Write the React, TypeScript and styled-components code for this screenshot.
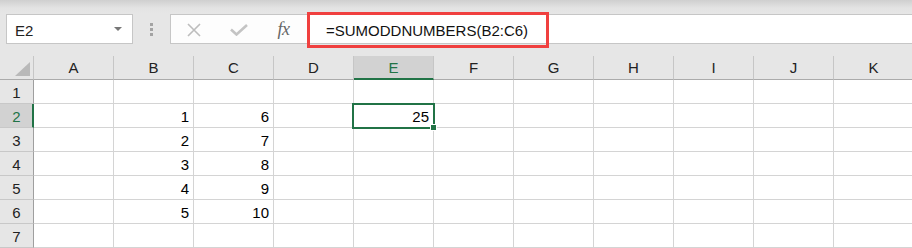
import styled, { createGlobalStyle, css } from "styled-components";

const COLUMNS = ["A", "B", "C", "D", "E", "F", "G", "H", "I", "J", "K"];

const DATA: Record<number, Record<string, string>> = {
   2: { B: "1", C: "6", E: "25" },
   3: { B: "2", C: "7" },
   4: { B: "3", C: "8" },
   5: { B: "4", C: "9" },
   6: { B: "5", C: "10" },
};

const ROW_COUNT = 7;
const ACTIVE = { column: "E", row: 2 };
const FORMULA = "=SUMODDNUMBERS(B2:C6)";

export default function App() {
   return (
      <>
         <GlobalStyle />
         <WindowStyled>
            <TopBand />
            <Toolbar>
               <NameBox>
                  <span>
                     {ACTIVE.column}
                     {ACTIVE.row}
                  </span>
                  <DropArrow />
               </NameBox>
               <Grip>
                  <i />
                  <i />
                  <i />
               </Grip>
               <FormulaButtons>
                  <IconSlot>
                     <svg width="14" height="14" viewBox="0 0 14 14">
                        <path
                           d="M1 1 L13 13 M13 1 L1 13"
                           stroke="#bdbdbd"
                           strokeWidth="1.6"
                           fill="none"
                        />
                     </svg>
                  </IconSlot>
                  <IconSlot>
                     <svg width="18" height="12" viewBox="0 0 18 12">
                        <polyline
                           points="1,5.5 6.5,10.5 17,1"
                           stroke="#c4c4c4"
                           strokeWidth="2.6"
                           fill="none"
                        />
                     </svg>
                  </IconSlot>
                  <IconSlot>
                     <FxLabel>fx</FxLabel>
                  </IconSlot>
               </FormulaButtons>
               <FormulaBar>
                  <Highlight />
                  <FormulaText>{FORMULA}</FormulaText>
               </FormulaBar>
            </Toolbar>

            <Sheet>
               <Corner>
                  <svg width="34" height="24" viewBox="0 0 34 24">
                     <polygon points="30,6 30,20 15,20" fill="#b9b9b9" />
                  </svg>
               </Corner>
               {COLUMNS.map((column) => (
                  <ColumnHeader
                     key={column}
                     $isActive={column === ACTIVE.column}
                  >
                     {column}
                  </ColumnHeader>
               ))}

               {Array.from({ length: ROW_COUNT }, (_, index) => {
                  const row = index + 1;
                  return [
                     <RowHeader key={`h${row}`} $isActive={row === ACTIVE.row}>
                        {row}
                     </RowHeader>,
                     ...COLUMNS.map((column) => (
                        <Cell
                           key={`${column}${row}`}
                           $isActive={
                              row === ACTIVE.row && column === ACTIVE.column
                           }
                        >
                           {DATA[row]?.[column] ?? ""}
                        </Cell>
                     )),
                  ];
               })}
            </Sheet>
         </WindowStyled>
      </>
   );
}

const GlobalStyle = createGlobalStyle`
   body {
      margin: 0;
      background: #ffffff;
      font-family: "Liberation Sans", Arial, sans-serif;
      overflow: hidden;
   }
`;

const WindowStyled = styled.div`
   width: 912px;
   height: 248px;
   overflow: hidden;
   background: #e6e6e6;
`;

const TopBand = styled.div`
   height: 14px;
   background: linear-gradient(#cfcfcf, #e3e3e3 8px, #e6e6e6);
`;

const Toolbar = styled.div`
   display: flex;
   align-items: stretch;
   height: 30px;
   padding-left: 6px;
   margin-bottom: 12px;
`;

const NameBox = styled.div`
   box-sizing: border-box;
   width: 127px;
   display: flex;
   align-items: center;
   justify-content: space-between;
   padding: 2px 10px 0 8px;
   background: #ffffff;
   border: 1px solid #c6c6c6;
   font-size: 15px;
   color: #222222;
`;

const DropArrow = styled.span`
   width: 0;
   height: 0;
   margin-top: -2px;
   border-left: 4px solid transparent;
   border-right: 4px solid transparent;
   border-top: 4px solid #777777;
`;

const Grip = styled.div`
   width: 37px;
   display: flex;
   flex-direction: column;
   align-items: center;
   justify-content: center;
   gap: 2px;

   i {
      display: block;
      width: 3px;
      height: 3px;
      background: #a3a3a3;
   }
`;

const FormulaButtons = styled.div`
   box-sizing: border-box;
   width: 137px;
   display: grid;
   grid-template-columns: repeat(3, 45px);
   background: #fdfdfd;
   border: 1px solid #c6c6c6;
   border-right: none;
`;

const IconSlot = styled.div`
   display: flex;
   align-items: center;
   justify-content: center;
   padding-top: 1px;
`;

const FxLabel = styled.span`
   font-family: "Liberation Serif", "Times New Roman", serif;
   font-style: italic;
   font-size: 18px;
   color: #666666;
   letter-spacing: -0.5px;
`;

const FormulaBar = styled.div`
   position: relative;
   flex: 1;
   box-sizing: border-box;
   display: flex;
   align-items: center;
   padding: 3px 0 0 18px;
   background: #ffffff;
   border: 1px solid #c6c6c6;
   border-right: none;
`;

const FormulaText = styled.span`
   font-size: 15px;
   color: #111111;
`;

const Highlight = styled.div`
   position: absolute;
   left: -1px;
   top: -3px;
   width: 242px;
   height: 36px;
   box-sizing: border-box;
   border: 3px solid #f0403f;
   pointer-events: none;
`;

const Sheet = styled.div`
   display: grid;
   grid-template-columns: 34px repeat(11, 80px);
   grid-auto-rows: 24px;
   background: #ffffff;
   font-size: 15px;
`;

const Corner = styled.div`
   background: #e6e6e6;
   border-bottom: 1px solid #ababab;
   border-right: 1px solid #c6c6c6;
   box-sizing: border-box;
   line-height: 0;
`;

const ColumnHeader = styled.div<{ $isActive: boolean }>`
   box-sizing: border-box;
   display: flex;
   align-items: center;
   justify-content: center;
   background: #e6e6e6;
   color: #222222;
   border-right: 1px solid #c6c6c6;
   border-bottom: 1px solid #ababab;

   ${({ $isActive }) =>
      $isActive &&
      css`
         background: #d2d2d2;
         color: #217346;
         border-bottom: 2px solid #217346;
         padding-top: 1px;
      `}
`;

const RowHeader = styled.div<{ $isActive: boolean }>`
   box-sizing: border-box;
   display: flex;
   align-items: center;
   justify-content: center;
   padding-top: 1px;
   background: #e6e6e6;
   color: #222222;
   border-right: 1px solid #9f9f9f;
   border-bottom: 1px solid #c8c8c8;

   ${({ $isActive }) =>
      $isActive &&
      css`
         background: #d2d2d2;
         color: #217346;
         border-right: 2px solid #217346;
         padding-left: 1px;
      `}
`;

const Cell = styled.div<{ $isActive: boolean }>`
   position: relative;
   box-sizing: border-box;
   display: flex;
   align-items: center;
   justify-content: flex-end;
   padding: 1px 4px 0 0;
   color: #000000;
   border-right: 1px solid #d4d4d4;
   border-bottom: 1px solid #d4d4d4;

   ${({ $isActive }) =>
      $isActive &&
      css`
         z-index: 1;

         &::before {
            content: "";
            position: absolute;
            left: -2px;
            top: -1px;
            right: -2px;
            bottom: -2px;
            border: 2px solid #217346;
         }

         &::after {
            content: "";
            position: absolute;
            right: -4px;
            bottom: -4px;
            width: 5px;
            height: 5px;
            background: #217346;
            border: 1px solid #ffffff;
         }
      `}
`;
